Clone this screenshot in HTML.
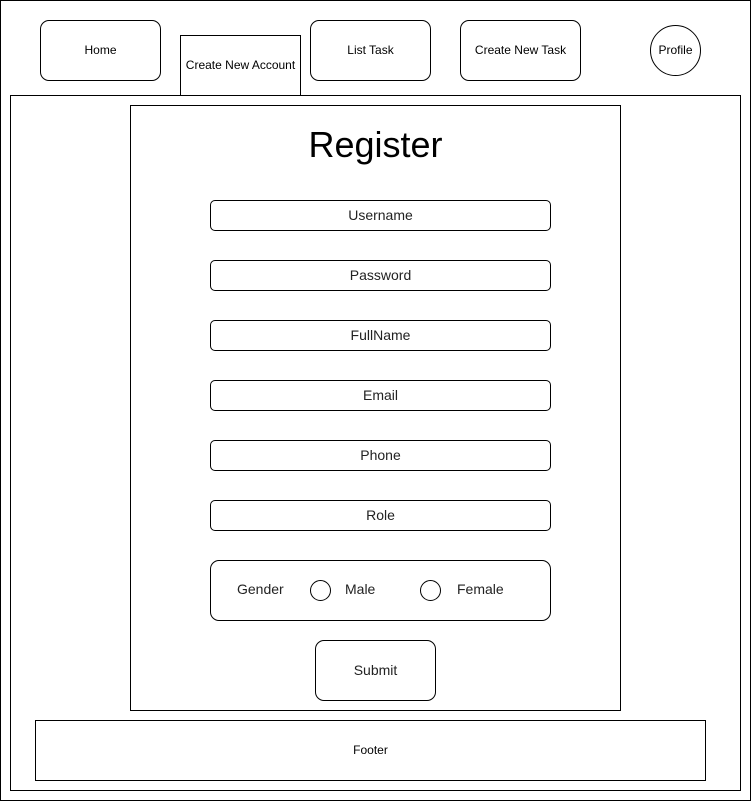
<!DOCTYPE html>
<html><head><style>
*{margin:0;padding:0;box-sizing:border-box}
body{width:751px;height:801px;background:#fff;position:relative;font-family:"Liberation Sans",Arial,sans-serif;color:#000;overflow:hidden}
.b{position:absolute;border:1px solid #000;display:flex;align-items:center;justify-content:center;background:#fff}
.b span{position:relative;top:-1px}
.r{border-radius:9px}
.s{font-size:12px}
.f{font-size:14px;color:#222;border-radius:5px}
.c{position:absolute;width:21px;height:21px;border:1px solid #000;border-radius:50%}
.t{position:absolute;font-size:14px;color:#222}
</style></head><body>
<div class="b" style="left:0;top:0;width:751px;height:801px"></div>
<div class="b r s" style="left:40px;top:20px;width:121px;height:61px"><span>Home</span></div>
<div class="b r s" style="left:310px;top:20px;width:121px;height:61px"><span>List Task</span></div>
<div class="b r s" style="left:460px;top:20px;width:121px;height:61px"><span>Create New Task</span></div>
<div class="b s" style="left:650px;top:25px;width:51px;height:51px;border-radius:50%"><span>Profile</span></div>
<div class="b" style="left:10px;top:95px;width:731px;height:696px"></div>
<div class="b s" style="left:180px;top:35px;width:121px;height:61px"><span>Create New Account</span></div>
<div class="b" style="left:130px;top:105px;width:491px;height:606px"></div>
<div style="position:absolute;left:130px;width:491px;top:124px;text-align:center;font-size:36px">Register</div>
<div class="b f" style="left:210px;top:200px;width:341px;height:31px"><span>Username</span></div>
<div class="b f" style="left:210px;top:260px;width:341px;height:31px"><span>Password</span></div>
<div class="b f" style="left:210px;top:320px;width:341px;height:31px"><span>FullName</span></div>
<div class="b f" style="left:210px;top:380px;width:341px;height:31px"><span>Email</span></div>
<div class="b f" style="left:210px;top:440px;width:341px;height:31px"><span>Phone</span></div>
<div class="b f" style="left:210px;top:500px;width:341px;height:31px"><span>Role</span></div>
<div class="b" style="left:210px;top:560px;width:341px;height:61px;border-radius:9px"></div>
<div class="t" style="left:237px;top:581px">Gender</div>
<div class="c" style="left:310px;top:580px"></div>
<div class="t" style="left:345px;top:581px">Male</div>
<div class="c" style="left:420px;top:580px"></div>
<div class="t" style="left:457px;top:581px">Female</div>
<div class="b r" style="left:315px;top:640px;width:121px;height:61px;font-size:14px;color:#222"><span>Submit</span></div>
<div class="b s" style="left:35px;top:720px;width:671px;height:61px"><span>Footer</span></div>
</body></html>
